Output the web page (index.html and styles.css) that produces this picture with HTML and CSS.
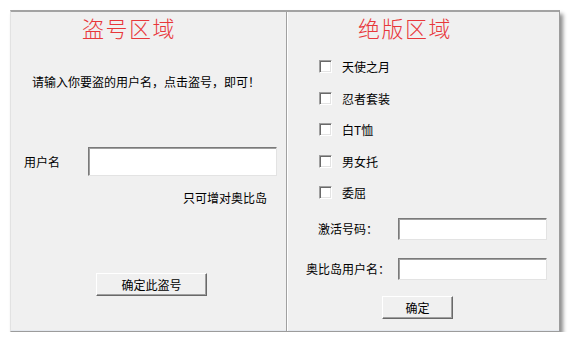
FILE: index.html
```html
<!DOCTYPE html>
<html lang="zh-CN">
  <head>
    <meta charset="UTF-8" />
    <title>盗号区域</title>
    <link rel="stylesheet" href="styles.css">
  </head>
  <body>
    <main class="frame">
      <section class="panel panel-left">
        <h2 class="panel-title">盗号区域</h2>
        <p class="tip">请输入你要盗的用户名，点击盗号，即可！</p>
        <div class="user-row">
          <label for="user" class="user-label">用户名</label>
          <input type="text" id="user" class="field user-field" />
        </div>
        <p class="note">只可增对奥比岛</p>
        <button type="button" class="win-btn steal-btn">确定此盗号</button>
      </section>
      <section class="panel panel-right">
        <h2 class="panel-title title-right">绝版区域</h2>
        <ul class="item-list">
          <li><label><input type="checkbox" class="cb" />天使之月</label></li>
          <li><label><input type="checkbox" class="cb" />忍者套装</label></li>
          <li><label><input type="checkbox" class="cb" />白T恤</label></li>
          <li><label><input type="checkbox" class="cb" />男女托</label></li>
          <li><label><input type="checkbox" class="cb" />委屈</label></li>
        </ul>
        <div class="form-row first-row">
          <label for="code" class="form-label">激活号码：</label>
          <input type="text" id="code" class="field form-field" />
        </div>
        <div class="form-row">
          <label for="obi" class="form-label">奥比岛用户名：</label>
          <input type="text" id="obi" class="field form-field" />
        </div>
        <button type="button" class="win-btn ok-btn">确定</button>
      </section>
    </main>
  </body>
</html>
```

FILE: styles.css
```css
body {
  margin: 0;
  background: #fff;
  font-family: "Noto Sans CJK SC", "Noto Sans", sans-serif;
  font-size: 12px;
  color: #000;
}
.frame {
  display: flex;
  box-sizing: border-box;
  margin: 10px 0 0 10px;
  width: 550px;
  height: 322px;
  background: #f0f0f0;
  border-top: 2px solid #a3a3a3;
  border-left: 1px solid #e2e2e2;
  border-right: 1px solid #9c9c9c;
  border-bottom: 1px solid #9c9c9c;
  box-shadow: 3px 4px 4px rgba(0, 0, 0, 0.45), inset 0 -1px 0 #e4e8ee;
}
.panel {
  display: flex;
  flex-direction: column;
  align-items: flex-start;
}
.panel-left {
  width: 275px;
  border-right: 1px solid #a0a0a0;
}
.panel-right {
  flex: 1;
  border-left: 1px solid #fff;
}
.panel-title {
  margin: 2px 0 0 71px;
  font-size: 22px;
  line-height: 26px;
  font-weight: 300;
  color: #e8373a;
  letter-spacing: 1.5px;
}
.title-right {
  margin-left: 70px;
}
.tip {
  margin: 34px 0 0 21px;
  line-height: 16px;
}
.user-row {
  display: flex;
  align-items: center;
  margin-top: 57px;
}
.user-label {
  width: 64px;
  padding-left: 13px;
  box-sizing: border-box;
}
.field {
  box-sizing: border-box;
  margin: 0;
  padding: 0 3px;
  background: #fff;
  border: 1px solid;
  border-color: #7a7a7a #e3e3e3 #e3e3e3 #7a7a7a;
  box-shadow: inset 1px 1px 0 #a0a0a0;
  font: inherit;
}
.user-field {
  width: 189px;
  height: 29px;
  margin-left: 13px;
}
.note {
  align-self: flex-end;
  margin: 14px 19px 0 0;
  line-height: 16px;
}
.win-btn {
  box-sizing: border-box;
  height: 23px;
  padding: 0;
  background: #f0f0f0;
  border: 1px solid;
  border-color: #fff #696969 #696969 #fff;
  box-shadow: inset -1px -1px 0 #a0a0a0;
  font: inherit;
  color: #000;
}
.steal-btn {
  width: 111px;
  margin: 67px 0 0 85px;
}
.item-list {
  list-style: none;
  margin: 11px 0 0 0;
  padding: 0;
}
.item-list li {
  height: 31.5px;
  display: flex;
  align-items: center;
}
.item-list label {
  display: flex;
  align-items: center;
}
.cb {
  appearance: none;
  -webkit-appearance: none;
  box-sizing: border-box;
  width: 13px;
  height: 13px;
  margin: 0 10px 0 31px;
  background: #fff;
  border: 1px solid;
  border-color: #a0a0a0 #fff #fff #a0a0a0;
  box-shadow: inset 1px 1px 0 #696969, inset -1px -1px 0 #e3e3e3;
}
.form-row {
  display: flex;
  align-items: center;
  margin-top: 18px;
}
.first-row {
  margin-top: 9px;
}
.form-label {
  width: 100px;
  margin-left: 10px;
  text-align: center;
}
.form-field {
  width: 149px;
  height: 22px;
}
.ok-btn {
  width: 71px;
  margin: 16px 0 0 94px;
}
```
